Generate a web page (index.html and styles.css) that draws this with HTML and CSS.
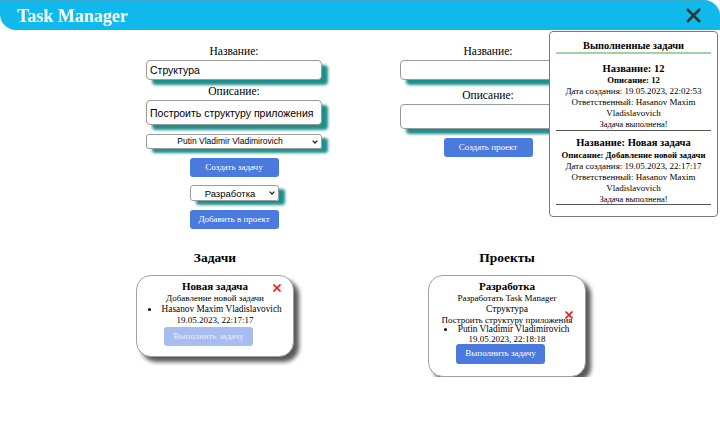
FILE: index.html
```html
<!DOCTYPE html>
<html lang="ru">
<head>
<meta charset="utf-8">
<title>Task Manager</title>
<link rel="stylesheet" href="styles.css">
</head>
<body>
<header class="header">
  <div class="title">Task Manager</div>
  <button class="close" aria-label="Закрыть">
    <svg width="17" height="17" viewBox="0 0 17 17"><path d="M2 2 L15 15 M15 2 L2 15" stroke="#333" stroke-width="2.6" stroke-linecap="butt"/></svg>
  </button>
</header>

<main>
  <section class="forms">
    <div class="form">
      <label class="lbl">Название:</label>
      <input class="field" type="text" value="Структура">
      <label class="lbl lbl-gap">Описание:</label>
      <textarea class="field area">Построить структуру приложения</textarea>
      <div class="sel-wrap sel-wide">
        <select class="sel"><option>Putin Vladimir Vladimirovich</option></select>
        <svg class="chev" width="6" height="4" viewBox="0 0 6 4"><path d="M0.6 0.6 L3 3 L5.4 0.6" fill="none" stroke="#222" stroke-width="1.3"/></svg>
      </div>
      <button class="btn btn-after">Создать задачу</button>
      <div class="sel-wrap sel-short">
        <select class="sel"><option>Разработка</option></select>
        <svg class="chev" width="6" height="4" viewBox="0 0 6 4"><path d="M0.6 0.6 L3 3 L5.4 0.6" fill="none" stroke="#222" stroke-width="1.3"/></svg>
      </div>
      <button class="btn btn-after">Добавить в проект</button>
    </div>
    <div class="form">
      <label class="lbl">Название:</label>
      <input class="field" type="text" value="">
      <label class="lbl lbl-gap2">Описание:</label>
      <textarea class="field area"></textarea>
      <button class="btn btn-after">Создать проект</button>
    </div>
  </section>

  <section class="lists">
    <div class="col">
      <h2 class="col-title">Задачи</h2>
      <div class="card card-task">
        <div class="task">
          <span class="del del-task"><svg width="8" height="8" viewBox="0 0 8 8"><path d="M0.5 0.5 L7.5 7.5 M7.5 0.5 L0.5 7.5" stroke="#f01818" stroke-width="1.6"/></svg></span>
          <div class="c-name">Новая задача</div>
          <div class="c-line">Добавление новой задачи</div>
          <ul class="c-list"><li>Hasanov Maxim Vladislavovich</li></ul>
          <div class="c-line">19.05.2023, 22:17:17</div>
          <button class="btn btn-card btn-off">Выполнить задачу</button>
        </div>
      </div>
    </div>
    <div class="col">
      <h2 class="col-title">Проекты</h2>
      <div class="card card-proj">
        <div class="c-name">Разработка</div>
        <div class="c-line">Разработать Task Manager</div>
        <div class="task sub">
          <span class="del del-sub"><svg width="8" height="8" viewBox="0 0 8 8"><path d="M0.5 0.5 L7.5 7.5 M7.5 0.5 L0.5 7.5" stroke="#f01818" stroke-width="1.6"/></svg></span>
          <div class="s-name">Структура</div>
          <div class="s-line">Построить структуру приложения</div>
          <ul class="c-list s-list"><li>Putin Vladimir Vladimirovich</li></ul>
          <div class="s-line">19.05.2023, 22:18:18</div>
          <button class="btn btn-card btn-task">Выполнить задачу</button>
        </div>
      </div>
    </div>
  </section>

  <aside class="done">
    <div class="done-title">Выполненные задачи</div>
    <div class="done-item">
      <div class="d-name">Название: 12</div>
      <div class="d-desc">Описание: 12</div>
      <div class="d-line">Дата создания: 19.05.2023, 22:02:53</div>
      <div class="d-line">Ответственный: Hasanov Maxim Vladislavovich</div>
      <div class="d-ok">Задача выполнена!</div>
    </div>
    <div class="done-item">
      <div class="d-name">Название: Новая задача</div>
      <div class="d-desc">Описание: Добавление новой задачи</div>
      <div class="d-line">Дата создания: 19.05.2023, 22:17:17</div>
      <div class="d-line">Ответственный: Hasanov Maxim Vladislavovich</div>
      <div class="d-ok">Задача выполнена!</div>
    </div>
  </aside>
</main>
</body>
</html>
```

FILE: styles.css
```css
* { box-sizing: border-box; }

body {
  margin: 0;
  font-family: "Liberation Serif", "Times New Roman", serif;
  color: #000;
  background: #fff;
}

.header {
  height: 30px;
  background: #0fb9ec;
  border-top: 1px solid #38a9cf;
  border-radius: 0 16px 0 16px;
  display: flex;
  align-items: center;
  justify-content: space-between;
  padding: 0 18px 0 17px;
}

.title {
  color: #fff;
  font-weight: bold;
  font-size: 18px;
  line-height: 22px;
}

.close {
  border: none;
  background: transparent;
  padding: 0;
  margin: 0;
  width: 17px;
  height: 17px;
  display: flex;
}

main { position: relative; }

.forms {
  display: grid;
  grid-template-columns: 254px 254px;
  margin-left: 107px;
  padding-top: 14px;
}

.form {
  display: flex;
  flex-direction: column;
  align-items: center;
}

.lbl {
  font-size: 11.5px;
  line-height: 15px;
  height: 15px;
}
.lbl-gap { margin-top: 4px; }
.lbl-gap2 { margin-top: 8px; }

.field {
  width: 176px;
  height: 20px;
  margin-top: 1px;
  border: 1px solid #9a9a9a;
  border-radius: 4px;
  box-shadow: 6px 5px 3px #1d8e89;
  font-family: "Liberation Sans", Arial, sans-serif;
  font-size: 10.5px;
  padding: 0 3px;
  color: #000;
  background: #fff;
}

.area {
  height: 25px;
  resize: none;
  padding: 5px 3px 0;
  line-height: 14px;
  overflow: hidden;
  white-space: nowrap;
}

.sel-wrap {
  position: relative;
  display: flex;
  height: 15px;
  border-radius: 3px;
  box-shadow: 6px 4px 3px #1d8e89;
}

.sel {
  appearance: none;
  -webkit-appearance: none;
  width: 100%;
  height: 100%;
  font-family: "Liberation Sans", Arial, sans-serif;
  text-align: center;
  text-align-last: center;
  border: 1px solid #9a9a9a;
  border-radius: 3px;
  background: #fff;
  color: #000;
  padding: 0 8px 0 0;
  line-height: 13px;
}

.chev {
  position: absolute;
  right: 4px;
  top: 50%;
  margin-top: -2px;
}

.sel-wide { width: 176px; margin-top: 9px; }
.sel-wide .sel { font-size: 8.5px; }
.sel-short { width: 89px; height: 16px; margin-top: 8px; }
.sel-short .sel { font-size: 9.5px; }

.btn {
  width: 89px;
  height: 19px;
  border: none;
  border-radius: 3px;
  background: #4a7ade;
  color: #fff;
  font-family: "Liberation Serif", "Times New Roman", serif;
  font-size: 9px;
  padding: 0;
  line-height: 19px;
}
.btn-after { margin-top: 9px; }
.btn-card { margin-right: 13px; }

.lists {
  display: grid;
  grid-template-columns: 292px 292px;
  margin-left: 69px;
  margin-top: 20px;
}

.col {
  display: flex;
  flex-direction: column;
  align-items: center;
}

.col-title {
  margin: 0;
  font-size: 13.5px;
  line-height: 18px;
  font-weight: bold;
}

.card {
  margin-top: 8px;
  width: 158px;
  border: 1px solid #a0a0a0;
  border-radius: 15px;
  background: #fff;
  box-shadow: 5px 5px 4px rgba(0, 0, 0, 0.65);
  text-align: center;
  padding: 3.5px 0 10px;
}

.card-proj { padding-bottom: 12px; }

.task {
  position: relative;
  display: flex;
  flex-direction: column;
  align-items: center;
}

.del {
  position: absolute;
  display: flex;
}
.del-task { top: 4.5px; right: 12px; }
.del-sub { top: 7px; right: 12px; }

.c-name {
  font-weight: bold;
  font-size: 11px;
  line-height: 13px;
}

.c-line {
  font-size: 9px;
  line-height: 11px;
}

.c-list {
  margin: 0;
  padding: 0;
  list-style: disc inside;
  font-size: 9.3px;
  line-height: 11px;
}

.btn-off {
  margin-top: 1.5px;
  background: #a7bdf0;
  color: #e6edfc;
}

.s-name {
  font-size: 9.5px;
  line-height: 11px;
}
.s-line {
  font-size: 9px;
  line-height: 10px;
}
.s-list { line-height: 9.5px; }
.btn-task { height: 19.5px; }

.done {
  position: absolute;
  top: 1px;
  left: 549px;
  width: 169px;
  height: 186px;
  border: 1px solid #7a7a7a;
  border-radius: 4px;
  background: #fff;
  padding: 7px 6px 0;
  text-align: center;
  z-index: 2;
}

.done-title {
  font-weight: bold;
  font-size: 10.4px;
  line-height: 13px;
  border-bottom: 2px solid #9fd49f;
}

.done-item {
  border-bottom: 1px solid #555;
  padding-top: 8px;
}
.done-item + .done-item { padding-top: 5px; }
.done-item + .done-item .d-desc { line-height: 12px; }
.done-item + .done-item .d-ok { line-height: 10px; }

.d-name {
  font-weight: bold;
  font-size: 10.5px;
  line-height: 13px;
}
.d-desc {
  font-weight: bold;
  font-size: 8.7px;
  line-height: 11px;
}
.d-line {
  font-size: 9px;
  line-height: 11px;
}
.d-ok {
  font-size: 8.5px;
  line-height: 11px;
}
```
